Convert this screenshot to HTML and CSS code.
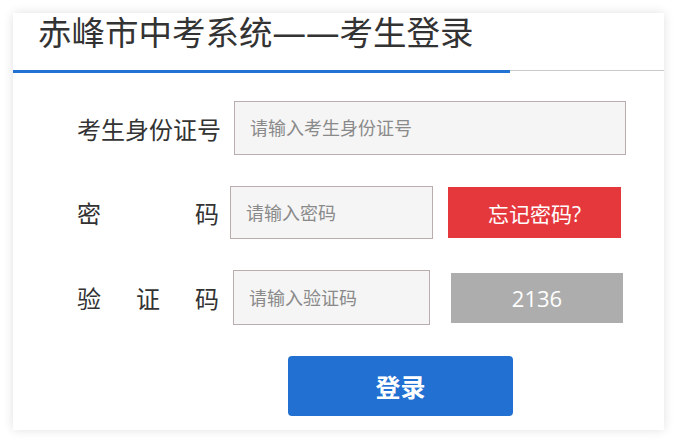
FILE: index.html
```html
<!DOCTYPE html>
<html lang="zh-CN">
<head>
  <meta charset="UTF-8">
  <meta name="viewport" content="width=device-width, initial-scale=1.0">
  <title>考生登录</title>
  <link rel="stylesheet" href="styles.css">
</head>
<body>

  <!-- Login box -->
  <div class="login-box">
    <div class="header">
      <h1 class="title">赤峰市中考系统——考生登录</h1>
    </div>

    <div class="login-form">
      <div class="row">
        <label class="label">考生身份证号</label>
        <input type="text" class="field field-id" placeholder="请输入考生身份证号">
      </div>

      <div class="row">
        <label class="label spread"><span>密</span><span>码</span></label>
        <input type="password" class="field field-pwd" placeholder="请输入密码">
        <button class="btn-forget">忘记密码?</button>
      </div>

      <div class="row">
        <label class="label spread"><span>验</span><span>证</span><span>码</span></label>
        <input type="text" class="field field-code" placeholder="请输入验证码">
        <div class="captcha">2136</div>
      </div>

      <div class="submit-row">
        <button class="btn-login">登录</button>
      </div>
    </div>
  </div>

</body>
</html>
```

FILE: styles.css
```css
body {
  font-family: "Open Sans", "Noto Sans CJK SC", sans-serif;
  margin: 0;
  padding: 13px;
  background-color: #fff;
  color: #333;
}
.login-box {
  width: 651px;
  height: 417px;
  background-color: #fff;
  box-shadow: 0 0 10px rgba(0, 0, 0, 0.12);
}
.header {
  height: 57px;
  border-bottom: 1px solid #c9c9c9;
}
.title {
  width: 472px;
  height: 57px;
  margin: 0 0 -3px 0;
  padding: 0 0 0 25px;
  border-bottom: 3px solid #2272d4;
  font-size: 33.5px;
  font-weight: normal;
  line-height: 38px;
  color: #333;
  white-space: nowrap;
}
.login-form {
  padding: 30px 0 0 64px;
}
.row {
  display: flex;
  align-items: center;
  margin-bottom: 31px;
}
.label {
  flex-shrink: 0;
  width: 142px;
  font-size: 24px;
  color: #333;
  white-space: nowrap;
}
.spread {
  display: flex;
  justify-content: space-between;
}
.field {
  box-sizing: border-box;
  flex-shrink: 0;
  height: 54px;
  padding: 0 15px;
  border: 1px solid #b9adad;
  background-color: #f5f5f5;
  font-family: "Open Sans", "Noto Sans CJK SC", sans-serif;
  font-size: 18px;
  color: #333;
  outline: none;
}
.field::placeholder {
  color: #8a8a8a;
}
.field-id {
  width: 392px;
  margin-left: 15px;
}
.field-pwd {
  width: 203px;
  height: 53px;
  margin-left: 11px;
}
.field-code {
  width: 197px;
  height: 55px;
  margin-left: 14px;
}
.btn-forget {
  flex-shrink: 0;
  width: 173px;
  height: 51px;
  margin-left: 15px;
  border: none;
  background-color: #e5383d;
  color: #fff;
  font-family: "Open Sans", "Noto Sans CJK SC", sans-serif;
  font-size: 21px;
  cursor: pointer;
}
.captcha {
  flex-shrink: 0;
  width: 172px;
  height: 50px;
  margin-left: 21px;
  background-color: #adadad;
  color: #fff;
  font-size: 22px;
  line-height: 50px;
  text-align: center;
}
.submit-row {
  padding-left: 211px;
}
.btn-login {
  width: 225px;
  height: 60px;
  border: none;
  border-radius: 4px;
  background-color: #2170d2;
  color: #fff;
  font-family: "Open Sans", "Noto Sans CJK SC", sans-serif;
  font-size: 25px;
  font-weight: bold;
  cursor: pointer;
}
```
